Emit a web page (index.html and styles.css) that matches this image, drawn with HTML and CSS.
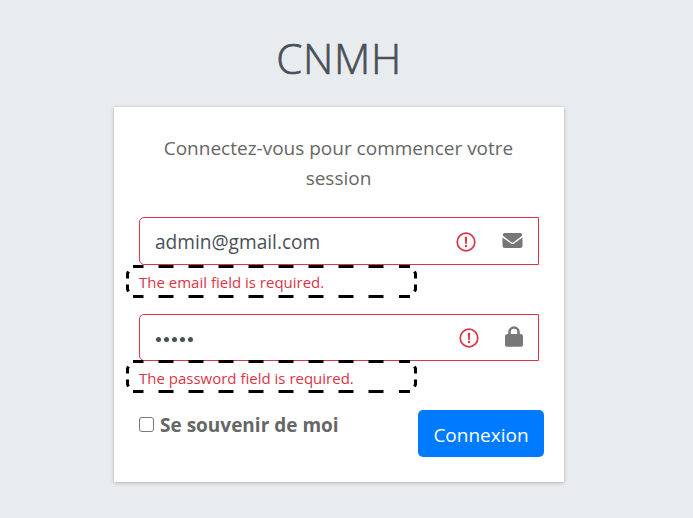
FILE: index.html
```html
<!DOCTYPE html>
<html lang="fr">
<head>
<meta charset="utf-8">
<title>CNMH</title>
<link rel="stylesheet" href="styles.css">
</head>
<body>
<svg class="defs" aria-hidden="true">
  <symbol id="alert" viewBox="0 0 20 20">
    <circle cx="10" cy="10" r="8.8" fill="none" stroke="#dc3545" stroke-width="1.7"/>
    <path d="M8.8 4.7h2.4l-.45 7.2h-1.5z" fill="#dc3545"/>
    <circle cx="10" cy="14" r="1.2" fill="#dc3545"/>
  </symbol>
  <symbol id="dashes" viewBox="0 0 291 33">
    <g fill="none" stroke="#000" stroke-width="3">
      <path d="M32.5 1.5H267" stroke-dasharray="15 15"/>
      <path d="M32.5 31.5H267" stroke-dasharray="15 15"/>
      <path d="M7 1.5H17.5M7 31.5H17.5M273 1.5H284M273 31.5H284"/>
      <path d="M1.5 13.5V8.5L2.5 6.5M1.5 19.5V24.5L2.5 26.5M289.5 13.5V8.5L288.5 6.5M289.5 19.5V24.5L288.5 26.5"/>
    </g>
  </symbol>
</svg>
<main class="login">
  <h1 class="logo">CNMH</h1>
  <form class="card">
    <p class="message">Connectez-vous pour commencer votre<br>session</p>
    <div class="field email">
      <span class="value">admin@gmail.com</span>
      <svg class="alert"><use href="#alert"/></svg>
      <svg class="envelope" viewBox="0 0 512 384"><path fill="#777" d="M48 0h416a48 48 0 0 1 19 86L275 243a32 32 0 0 1-38 0L29 86A48 48 0 0 1 48 0zM0 112l218 156a64 64 0 0 0 76 0l218-156v208a64 64 0 0 1-64 64H64a64 64 0 0 1-64-64z"/></svg>
    </div>
    <div class="error">
      <svg class="outline"><use href="#dashes"/></svg>
      <span class="error-text email-error">The email field is required.</span>
    </div>
    <div class="field password">
      <span class="dots"><i></i><i></i><i></i><i></i><i></i></span>
      <svg class="alert"><use href="#alert"/></svg>
      <svg class="lock" viewBox="0 0 448 512"><path fill="#777" fill-rule="evenodd" d="M80 192v-48a144 144 0 0 1 288 0v48h16a64 64 0 0 1 64 64v192a64 64 0 0 1-64 64H64a64 64 0 0 1-64-64V256a64 64 0 0 1 64-64zm64 0h160v-48a80 80 0 0 0-160 0z"/></svg>
    </div>
    <div class="error">
      <svg class="outline"><use href="#dashes"/></svg>
      <span class="error-text password-error">The password field is required.</span>
    </div>
    <div class="actions">
      <label class="remember"><span class="box"></span><b class="remember-text">Se souvenir de moi</b></label>
      <button class="submit" type="button">Connexion</button>
    </div>
  </form>
</main>
</body>
</html>
```
FILE: styles.css
```css
* { box-sizing: border-box; }

body {
  margin: 0;
  height: 518px;
  overflow: hidden;
  background: #e9ecef;
  font-family: "Open Sans", "Noto Sans", sans-serif;
  color: #495057;
}

.defs { position: absolute; width: 0; height: 0; }
svg { display: block; flex: none; }

.login { width: 450px; margin-left: 114px; }

.logo {
  height: 107px;
  margin: 0;
  padding-top: 32px;
  font-size: 42px;
  font-weight: 300;
  line-height: 52px;
  letter-spacing: .7px;
  text-align: center;
  -webkit-text-stroke: 0.7px #495057;
}

.card {
  height: 375px;
  padding: 26px 20px 0 25px;
  background: #fff;
  box-shadow: 0 0 1px rgba(0, 0, 0, .13), 0 1px 4px rgba(0, 0, 0, .22);
}

.message {
  height: 84px;
  margin: 0 6px 0 0;
  font-size: 19px;
  line-height: 30px;
  text-align: center;
  color: #666;
  white-space: nowrap;
}

.field {
  display: flex;
  align-items: center;
  width: 400px;
  height: 48px;
  padding: 0 15px;
  border: 1px solid #dc3545;
  border-radius: 5px 0 0 5px;
}

.field .alert { width: 20px; height: 20px; margin-left: auto; }
.email .alert { margin-top: 1px; }
.value { padding-top: 2px; font-size: 19.1px; line-height: 30px; }
.envelope { width: 21px; height: 15px; margin: 0 0 1px 26px; }
.password { height: 47px; }
.lock { width: 18px; height: 21px; margin: 0 0 2px 26px; }

.dots { display: flex; gap: 3px; padding: 4px 0 0 1px; }
.dots i { width: 5px; height: 5px; border-radius: 50%; background: #495057; }

.error {
  position: relative;
  height: 49px;
  padding-top: 5px;
  font-size: 15px;
  line-height: 24px;
  color: #dc3545;
  white-space: nowrap;
}

.outline { position: absolute; left: -13px; top: 0; width: 291px; height: 33px; }
.password + .error { height: 49px; }
.password + .error .outline { top: -1px; }
.error-text { display: block; }

.actions { display: flex; justify-content: space-between; }

.remember { display: flex; align-items: center; height: 32px; gap: 6px; color: #666; }
.box { width: 15px; height: 15px; margin-top: -3px; border: 1px solid #767676; border-radius: 3px; }
.remember-text { margin-top: -2px; font-size: 19px; font-weight: 700; white-space: nowrap; }

.submit {
  width: 126px;
  height: 47px;
  padding: 2px 0 0;
  border: 0;
  border-radius: 5px;
  background: #007bff;
  color: #fff;
  font: 19px "Open Sans", "Noto Sans", sans-serif;
}
```
